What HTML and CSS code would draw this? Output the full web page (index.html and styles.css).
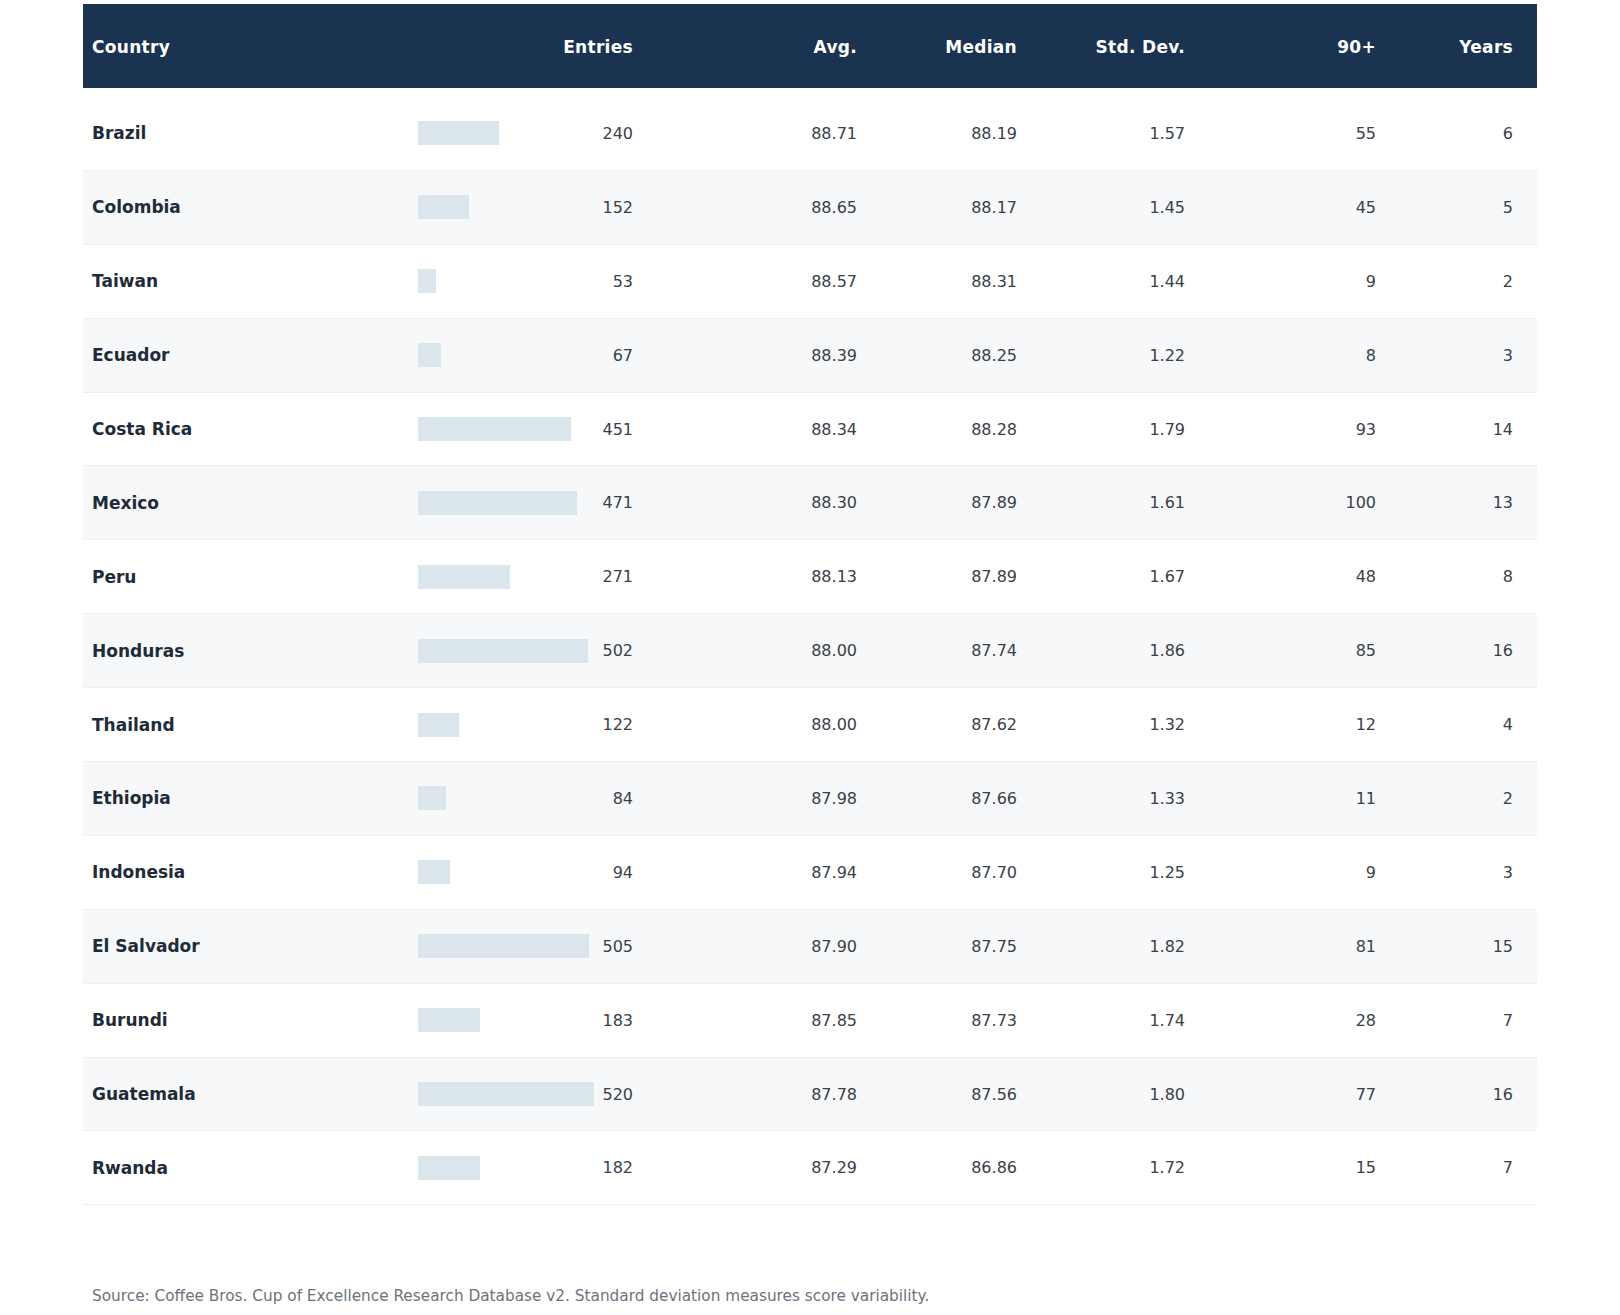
FILE: index.html
```html
<!DOCTYPE html>
<html lang="en">
<head>
<meta charset="utf-8">
<title>Cup of Excellence by Country</title>
<link rel="stylesheet" href="styles.css">
</head>
<body>
<main class="page">
  <table class="stats">
    <colgroup>
      <col class="c-country"><col class="c-entries"><col class="c-avg"><col class="c-median"><col class="c-std"><col class="c-90"><col class="c-years">
    </colgroup>
    <thead>
      <tr>
        <th class="left">Country</th>
        <th>Entries</th>
        <th>Avg.</th>
        <th>Median</th>
        <th>Std. Dev.</th>
        <th>90+</th>
        <th>Years</th>
      </tr>
    </thead>
    <tbody>
      <tr><td class="country">Brazil</td><td><div class="entries"><span class="bar" style="width:81.2px"></span><span>240</span></div></td><td>88.71</td><td>88.19</td><td>1.57</td><td>55</td><td>6</td></tr>
      <tr><td class="country">Colombia</td><td><div class="entries"><span class="bar" style="width:51.4px"></span><span>152</span></div></td><td>88.65</td><td>88.17</td><td>1.45</td><td>45</td><td>5</td></tr>
      <tr><td class="country">Taiwan</td><td><div class="entries"><span class="bar" style="width:17.9px"></span><span>53</span></div></td><td>88.57</td><td>88.31</td><td>1.44</td><td>9</td><td>2</td></tr>
      <tr><td class="country">Ecuador</td><td><div class="entries"><span class="bar" style="width:22.7px"></span><span>67</span></div></td><td>88.39</td><td>88.25</td><td>1.22</td><td>8</td><td>3</td></tr>
      <tr><td class="country">Costa Rica</td><td><div class="entries"><span class="bar" style="width:152.6px"></span><span>451</span></div></td><td>88.34</td><td>88.28</td><td>1.79</td><td>93</td><td>14</td></tr>
      <tr><td class="country">Mexico</td><td><div class="entries"><span class="bar" style="width:159.4px"></span><span>471</span></div></td><td>88.30</td><td>87.89</td><td>1.61</td><td>100</td><td>13</td></tr>
      <tr><td class="country">Peru</td><td><div class="entries"><span class="bar" style="width:91.7px"></span><span>271</span></div></td><td>88.13</td><td>87.89</td><td>1.67</td><td>48</td><td>8</td></tr>
      <tr><td class="country">Honduras</td><td><div class="entries"><span class="bar" style="width:169.9px"></span><span>502</span></div></td><td>88.00</td><td>87.74</td><td>1.86</td><td>85</td><td>16</td></tr>
      <tr><td class="country">Thailand</td><td><div class="entries"><span class="bar" style="width:41.3px"></span><span>122</span></div></td><td>88.00</td><td>87.62</td><td>1.32</td><td>12</td><td>4</td></tr>
      <tr><td class="country">Ethiopia</td><td><div class="entries"><span class="bar" style="width:28.4px"></span><span>84</span></div></td><td>87.98</td><td>87.66</td><td>1.33</td><td>11</td><td>2</td></tr>
      <tr><td class="country">Indonesia</td><td><div class="entries"><span class="bar" style="width:31.8px"></span><span>94</span></div></td><td>87.94</td><td>87.70</td><td>1.25</td><td>9</td><td>3</td></tr>
      <tr><td class="country">El Salvador</td><td><div class="entries"><span class="bar" style="width:170.9px"></span><span>505</span></div></td><td>87.90</td><td>87.75</td><td>1.82</td><td>81</td><td>15</td></tr>
      <tr><td class="country">Burundi</td><td><div class="entries"><span class="bar" style="width:61.9px"></span><span>183</span></div></td><td>87.85</td><td>87.73</td><td>1.74</td><td>28</td><td>7</td></tr>
      <tr><td class="country">Guatemala</td><td><div class="entries"><span class="bar" style="width:176px"></span><span>520</span></div></td><td>87.78</td><td>87.56</td><td>1.80</td><td>77</td><td>16</td></tr>
      <tr><td class="country">Rwanda</td><td><div class="entries"><span class="bar" style="width:61.6px"></span><span>182</span></div></td><td>87.29</td><td>86.86</td><td>1.72</td><td>15</td><td>7</td></tr>
    </tbody>
  </table>
  <p class="source">Source: Coffee Bros. Cup of Excellence Research Database v2. Standard deviation measures score variability.</p>
</main>
</body>
</html>
```

FILE: styles.css
```css
html, body {
  margin: 0;
  padding: 0;
  background: #ffffff;
}

body {
  font-family: "DejaVu Sans", "Liberation Sans", sans-serif;
  color: #3a4047;
}

.page {
  width: 1454px;
  margin: 0 auto;
  padding-top: 4px;
}

.stats {
  width: 1454px;
  table-layout: fixed;
  border-collapse: separate;
  border-spacing: 0;
}

.c-country { width: 327px; }
.c-entries { width: 231px; }
.c-avg { width: 222px; }
.c-median { width: 162px; }
.c-std { width: 168px; }
.c-90 { width: 191px; }
.c-years { width: 153px; }

.stats thead th {
  background: #1a3350;
  background-clip: padding-box;
  color: #ffffff;
  font-size: 17px;
  font-weight: bold;
  letter-spacing: 0.3px;
  height: 93px;
  padding: 2px 8px 0;
  border-bottom: 9px solid #ffffff;
  text-align: right;
  box-sizing: border-box;
}

.stats thead th.left {
  text-align: left;
  padding-left: 9px;
}

.stats th:nth-child(3),
.stats td:nth-child(3) {
  padding-right: 6px;
}

.stats th:last-child,
.stats td:last-child {
  padding-right: 24px;
}

.stats tbody td {
  height: 73.9px;
  padding: 0 8px;
  font-size: 16px;
  text-align: right;
  color: #3a4047;
  border-bottom: 1px solid #edf0f2;
  box-sizing: border-box;
}

.stats tbody tr:nth-child(even) td {
  background: #f6f8f9;
}

.stats tbody td.country {
  text-align: left;
  padding-left: 9px;
  font-size: 17px;
  font-weight: bold;
  color: #1f2b38;
}

.entries {
  display: flex;
  align-items: center;
  justify-content: space-between;
}

.bar {
  display: block;
  height: 24px;
  background: #dae6ec;
}

.source {
  margin: 82px 0 0;
  padding-left: 9px;
  font-size: 15.3px;
  color: #6b737c;
}
```
